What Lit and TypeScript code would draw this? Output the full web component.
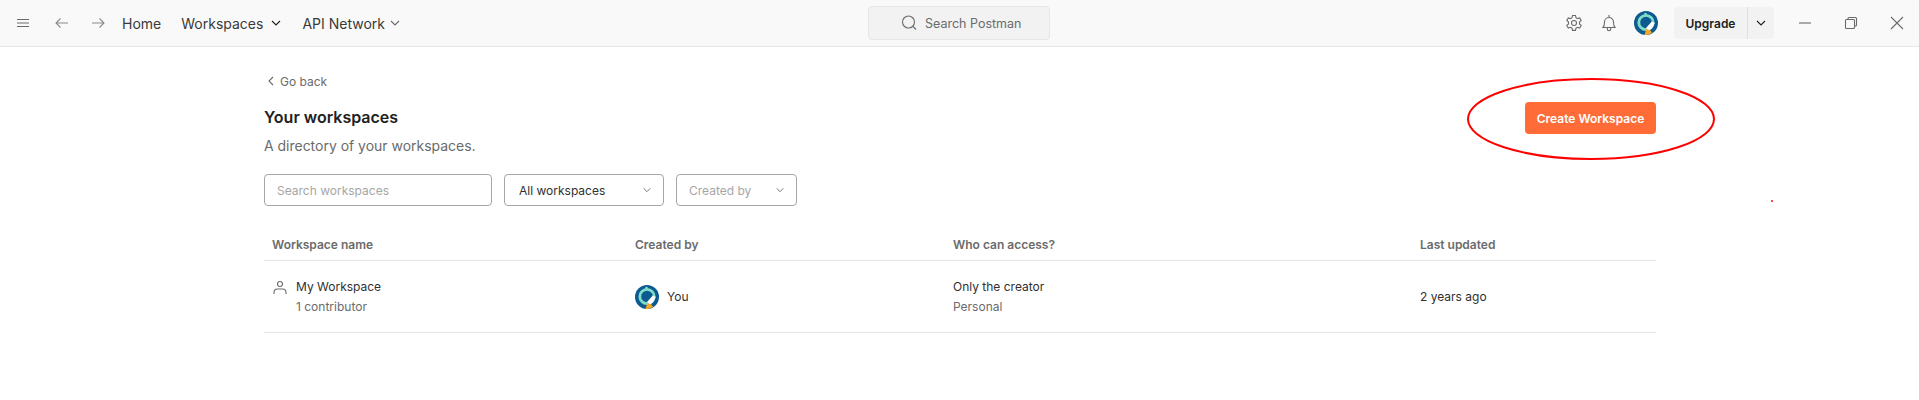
import { LitElement, html, css } from "lit";
import { customElement } from "lit/decorators.js";

const avatar = (size: number) => html`<svg class="avatar" width=${size} height=${size} viewBox="0 0 24 24">
  <circle cx="12" cy="12" r="12" fill="#0d5a91"/>
  <circle cx="12" cy="11.500" r="7.200" fill="none" stroke="#7fdcc8" stroke-width="2.800"/>
  <circle cx="11.500" cy="3" r="1.300" fill="#7fdcc8"/>
  <path d="M7.500 11c1-2.500 6-3.800 8.500-3 2.500 1 1 2.800-1 3.200l-3 1.300z" fill="#0d5a91"/>
  <path d="M12 17l5.800-6.500 3 1.500-3 5.500-3 2z" fill="#fff"/>
  <path d="M10.500 24l1.800-6 4.200 1.600 1.500 2.500a12 12 0 0 1-7.500 1.900z" fill="#f6a623"/>
</svg>`;
const chev = (size: number, color: string) => html`<svg width=${size} height=${size} viewBox="0 0 12 12" fill="none" stroke=${color} stroke-width="1.100"><path d="M2 4l4 4 4-4"/></svg>`;

@customElement("app-root")
export class AppRoot extends LitElement {
  static styles = css`
    :host { display: block; position: relative; width: 1919px; height: 400px; overflow: hidden; background: #fff; font-family: Inter, "Noto Sans", sans-serif; color: #303030; font-size: 12px; }
    svg { display: block; flex: none; }
    .top { height: 46px; box-sizing: content-box; border-bottom: 1px solid #e6e6e6; background: #f9f9f9; display: grid; grid-template-columns: 868px 182px 1fr; align-items: center; }
    .left { display: flex; align-items: center; padding-left: 16px; }
    .nav { font-size: 14px; color: #3a3a3a; white-space: nowrap; display: flex; align-items: center; }
    .search { height: 34px; box-sizing: border-box; background: #f2f2f2; border: 1px solid #e6e6e6; border-radius: 4px; display: flex; align-items: center; padding-left: 32px; gap: 8px; color: #6b6b6b; font-size: 12.500px; white-space: nowrap; }
    .right { display: flex; align-items: center; justify-content: flex-end; }
    .upgrade { width: 100px; height: 32px; border-radius: 4px; background: #f2f2f2; display: flex; align-items: stretch; margin-left: 16px; }
    .upgrade b { width: 73px; border-right: 1px solid #e0e0e0; display: flex; align-items: center; justify-content: center; font-size: 12px; font-weight: 600; color: #212121; }
    .upgrade span { flex: 1; display: flex; align-items: center; justify-content: center; }
    .win { width: 46px; display: flex; justify-content: center; }
    .win.first { margin-left: 8px; }
    .win.last { width: 45px; }
    .page { padding: 0 263px 0 264px; }
    .back { display: flex; align-items: center; gap: 5px; height: 16px; margin-top: 26px; padding-left: 3px; font-size: 12px; color: #6b6b6b; }
    .head { display: flex; justify-content: space-between; align-items: flex-start; margin-top: 12px; }
    h1 { margin: 0; font-size: 16px; line-height: 24px; font-weight: 600; color: #212121; margin-top: 4px; }
    .sub { font-size: 14px; letter-spacing: -0.02px; line-height: 20px; color: #6b6b6b; margin-top: 7px; }
    .create { width: 131px; height: 32px; margin-top: 1px; background: #ff6c37; border-radius: 4px; border: 0; color: #fff; font: 600 12px Inter, sans-serif; display: flex; align-items: center; justify-content: center; }
    .filters { display: flex; gap: 12px; margin-top: 18px; }
    .box { height: 32px; box-sizing: border-box; border: 1px solid #a6a6a6; border-radius: 4px; display: flex; align-items: center; justify-content: space-between; font-size: 12px; color: #a6a6a6; padding: 0 11px 0 12px; white-space: nowrap; }
    .box.dark { color: #303030; padding-left: 14px; }
    .grid { display: grid; }
    .thead { margin-top: 23px; height: 31px; border-bottom: 1px solid #e6e6e6; align-items: center; font-weight: 600; color: #6b6b6b; font-size: 12px; padding-left: 8px; grid-template-columns: 363px 318px 467px 1fr; }
    .row { height: 71px; border-bottom: 1px solid #e6e6e6; align-items: center; padding-left: 8px; grid-template-columns: 363px 318px 467px 1fr; }
    .stack { display: flex; flex-direction: column; gap: 6px; line-height: 14px; }
    .muted { color: #6b6b6b; }
    .name { display: flex; gap: 8px; align-items: flex-start; }
    .you { display: flex; align-items: center; gap: 8px; }
    .ring { position: absolute; left: 1465.500px; top: 76px; pointer-events: none; }
    .dot { position: absolute; left: 1771px; top: 200px; width: 2px; height: 2px; background: #e11; border-radius: 50%; }
  `;

  render() {
    return html`
      <div class="top">
        <div class="left">
          <svg width="14" height="14" viewBox="0 0 14 14" stroke="#6b6b6b" stroke-width="1"><path d="M1 3.500h12M1 7h12M1 10.500h12"/></svg>
          <svg style="margin-left:24px" width="16" height="16" viewBox="0 0 16 16" fill="none" stroke="#8a8a8a" stroke-width="1.100"><path d="M14 8H2M6.500 3.500L2 8l4.500 4.500"/></svg>
          <svg style="margin-left:20px" width="16" height="16" viewBox="0 0 16 16" fill="none" stroke="#8a8a8a" stroke-width="1.100"><path d="M2 8h12M9.500 3.500L14 8l-4.500 4.500"/></svg>
          <span class="nav" style="margin-left:16px">Home</span>
          <span class="nav" style="margin-left:20px">Workspaces</span>
          <span style="margin-left:7px">${chev(12, "#212121")}</span>
          <span class="nav" style="margin-left:20px">API Network</span>
          <span style="margin-left:4px">${chev(12, "#6b6b6b")}</span>
        </div>
        <div class="search">
          <svg width="16" height="16" viewBox="0 0 16 16" fill="none" stroke="#6b6b6b" stroke-width="1.100"><circle cx="7.500" cy="7" r="6"/><path d="M12 11.500l3 3"/></svg>
          Search Postman
        </div>
        <div class="right">
          <svg width="18" height="18" viewBox="0 0 18 18" fill="none" stroke="#6b6b6b" stroke-width="1.100"><circle cx="9" cy="9" r="2.500"/><path d="M7.500 1.500h3l.5 2.200 1.500.9 2.200-.7 1.500 2.600-1.700 1.500v1.900l1.700 1.500-1.500 2.600-2.200-.7-1.500.9-.5 2.200h-3l-.5-2.200-1.500-.9-2.200.7-1.500-2.600 1.700-1.500v-1.900L1.800 6.500l1.500-2.600 2.200.7 1.500-.9z"/></svg>
          <svg style="margin-left:18px" width="16" height="18" viewBox="0 0 16 18" fill="none" stroke="#6b6b6b" stroke-width="1.100"><path d="M2 13.500c1.500-1.500 1.500-3 1.500-5.500a4.500 4.500 0 0 1 9 0c0 2.500 0 4 1.500 5.500zM8 1v2.500M6.300 14v1a1.700 1.700 0 0 0 3.400 0v-1"/></svg>
          <span style="margin-left:17px">${avatar(24)}</span>
          <div class="upgrade"><b>Upgrade</b><span>${chev(12, "#212121")}</span></div>
          <div class="win first"><svg width="14" height="14" viewBox="0 0 14 14" stroke="#6b6b6b" stroke-width="1.100"><path d="M1 7h12"/></svg></div>
          <div class="win"><svg width="14" height="14" viewBox="0 0 14 14" fill="none" stroke="#6b6b6b" stroke-width="1.100"><rect x="1.500" y="3.500" width="9" height="9" rx="1"/><path d="M4 3.500V2.500a1 1 0 0 1 1-1h6.500a1 1 0 0 1 1 1V9a1 1 0 0 1-1 1h-1"/></svg></div>
          <div class="win last"><svg width="14" height="14" viewBox="0 0 14 14" stroke="#6b6b6b" stroke-width="1.100"><path d="M1 1l12 12M13 1L1 13"/></svg></div>
        </div>
      </div>
      <div class="page">
        <div class="back"><svg width="8" height="10" viewBox="0 0 8 10" fill="none" stroke="#6b6b6b" stroke-width="1.100"><path d="M6 1L2 5l4 4"/></svg>Go back</div>
        <div class="head">
          <div>
            <h1>Your workspaces</h1>
            <div class="sub">A directory of your workspaces.</div>
          </div>
          <button class="create">Create Workspace</button>
        </div>
        <div class="filters">
          <div class="box" style="width:228px">Search workspaces</div>
          <div class="box dark" style="width:160px">All workspaces ${chev(10, "#6b6b6b")}</div>
          <div class="box" style="width:121px">Created by ${chev(10, "#6b6b6b")}</div>
        </div>
        <div class="grid thead"><div>Workspace name</div><div>Created by</div><div>Who can access?</div><div>Last updated</div></div>
        <div class="grid row">
          <div class="name">
            <svg width="16" height="16" viewBox="0 0 16 16" fill="none" stroke="#6b6b6b" stroke-width="1.100"><circle cx="8" cy="4" r="2.500"/><path d="M2 14v-1.500A3.500 3.500 0 0 1 5.500 9h5a3.500 3.500 0 0 1 3.500 3.500V14"/></svg>
            <div class="stack"><span>My Workspace</span><span class="muted">1 contributor</span></div>
          </div>
          <div class="you">${avatar(24)}<span>You</span></div>
          <div class="stack"><span>Only the creator</span><span class="muted">Personal</span></div>
          <div>2 years ago</div>
        </div>
      </div>
      <svg class="ring" width="250" height="86" viewBox="0 0 250 86"><ellipse cx="125" cy="43" rx="123" ry="40" fill="none" stroke="#f00" stroke-width="2"/></svg>
      <div class="dot"></div>
    `;
  }
}
